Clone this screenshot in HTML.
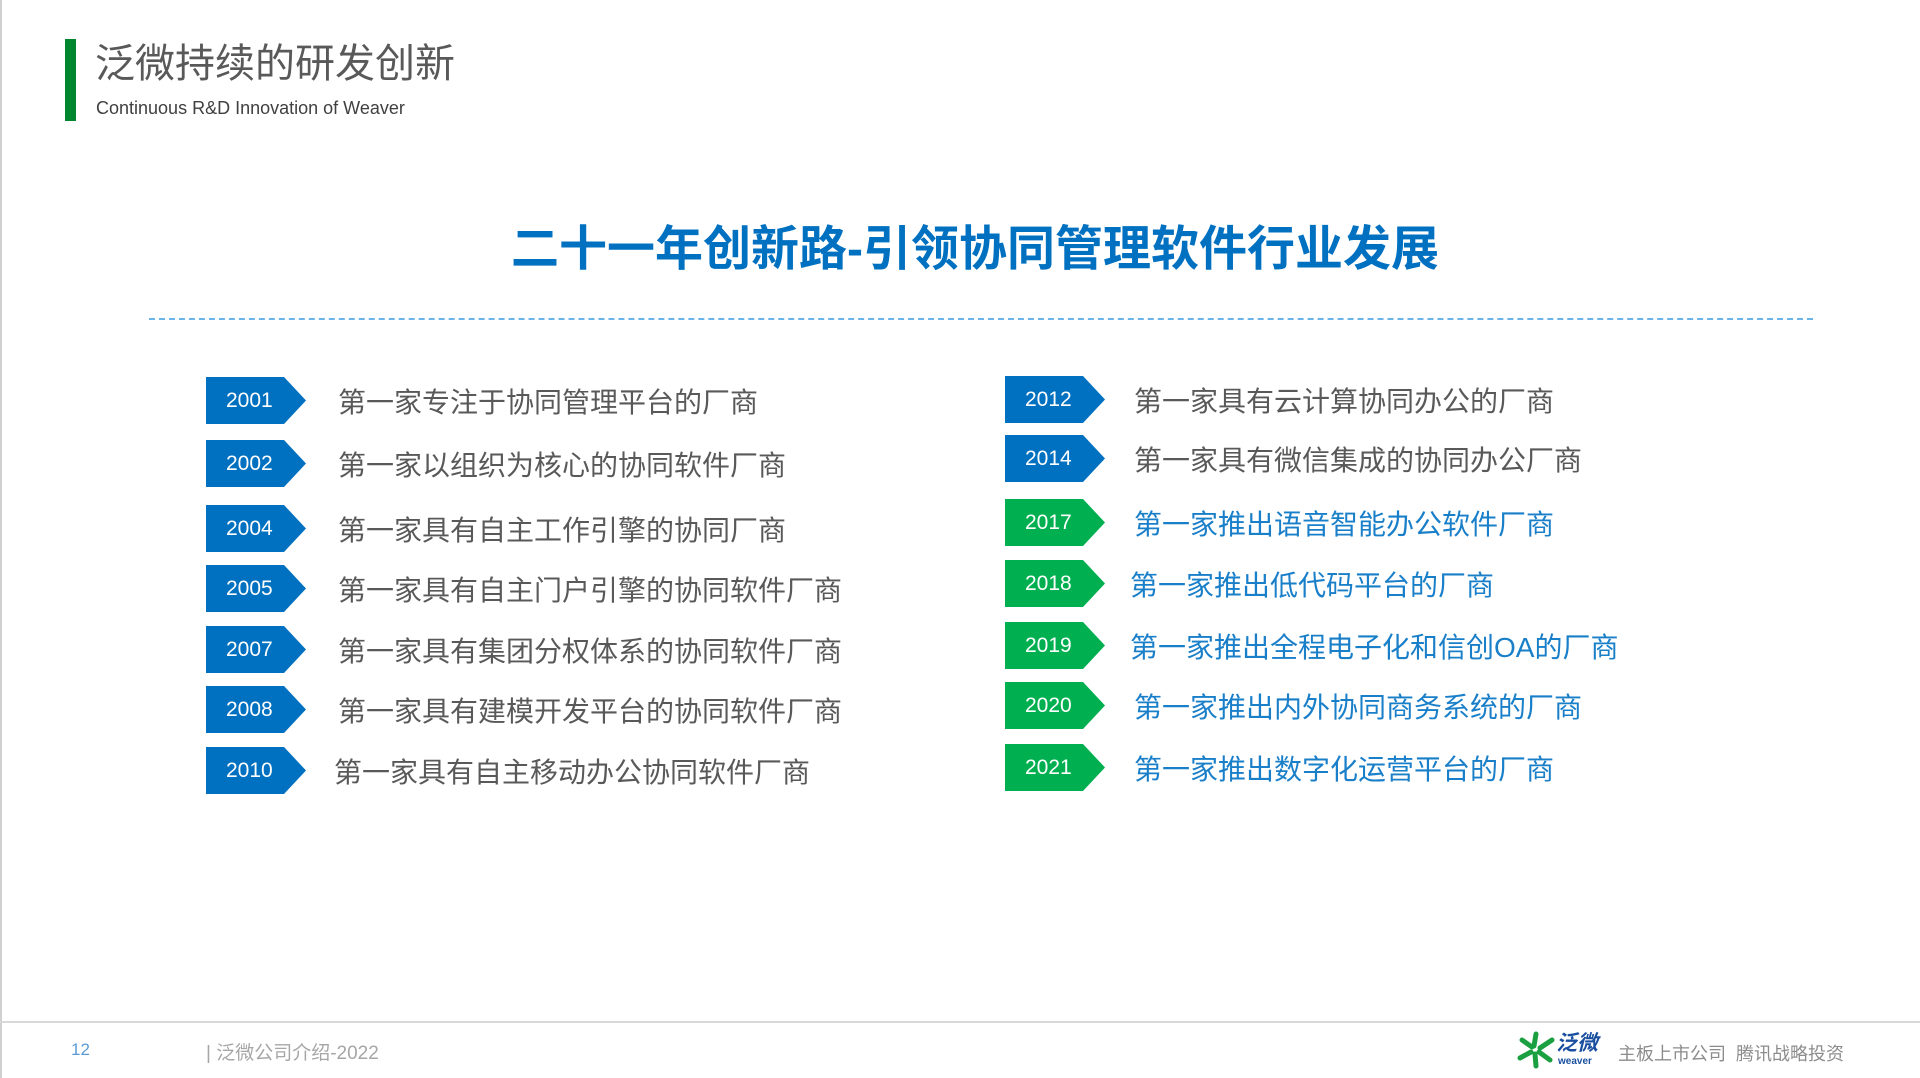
<!DOCTYPE html>
<html><head><meta charset="utf-8"><style>
*{margin:0;padding:0;box-sizing:border-box}
body{width:1920px;height:1078px;background:#fff;position:relative;overflow:hidden;font-family:"Liberation Sans","Noto Sans CJK SC",sans-serif}
.a{position:absolute;white-space:nowrap}
.box{position:absolute;width:100px;height:47px;clip-path:polygon(0 0,78% 0,100% 50%,78% 100%,0 100%);color:#fff;font-size:21px;line-height:47px;padding-left:20px}
.b{background:#0070c0}.g{background:#00b050}
.t{position:absolute;font-size:28px;line-height:36px;color:#595959;white-space:nowrap;margin-top:3px}
.tb{color:#1a7fc9}
</style></head><body>
<div class="a" style="left:0;top:0;width:2px;height:1078px;background:#d0d0d0"></div>
<div class="a" style="left:65px;top:39px;width:11px;height:82px;background:#00862f"></div>
<div class="a" style="left:95px;top:40px;font-size:40px;line-height:48px;color:#595959">泛微持续的研发创新</div>
<div class="a" style="left:96px;top:97px;font-size:18px;line-height:22px;color:#404040">Continuous R&amp;D Innovation of Weaver</div>
<div class="a" style="left:511px;top:222px;font-size:48px;line-height:56px;color:#0070c0;font-weight:bold">二十一年创新路-引领协同管理软件行业发展</div>
<div class="a" style="left:149px;top:318px;width:1664px;border-top:2px dashed #6ab4ea"></div>

<div class="box b" style="left:206px;top:377px">2001</div><div class="t" style="left:338px;top:382px">第一家专注于协同管理平台的厂商</div>
<div class="box b" style="left:206px;top:440px">2002</div><div class="t" style="left:338px;top:445px">第一家以组织为核心的协同软件厂商</div>
<div class="box b" style="left:206px;top:505px">2004</div><div class="t" style="left:338px;top:510px">第一家具有自主工作引擎的协同厂商</div>
<div class="box b" style="left:206px;top:565px">2005</div><div class="t" style="left:338px;top:570px">第一家具有自主门户引擎的协同软件厂商</div>
<div class="box b" style="left:206px;top:626px">2007</div><div class="t" style="left:338px;top:631px">第一家具有集团分权体系的协同软件厂商</div>
<div class="box b" style="left:206px;top:686px">2008</div><div class="t" style="left:338px;top:691px">第一家具有建模开发平台的协同软件厂商</div>
<div class="box b" style="left:206px;top:747px">2010</div><div class="t" style="left:334px;top:752px">第一家具有自主移动办公协同软件厂商</div>

<div class="box b" style="left:1005px;top:376px">2012</div><div class="t" style="left:1134px;top:381px">第一家具有云计算协同办公的厂商</div>
<div class="box b" style="left:1005px;top:435px">2014</div><div class="t" style="left:1134px;top:440px">第一家具有微信集成的协同办公厂商</div>
<div class="box g" style="left:1005px;top:499px">2017</div><div class="t tb" style="left:1134px;top:504px">第一家推出语音智能办公软件厂商</div>
<div class="box g" style="left:1005px;top:560px">2018</div><div class="t tb" style="left:1130px;top:565px">第一家推出低代码平台的厂商</div>
<div class="box g" style="left:1005px;top:622px">2019</div><div class="t tb" style="left:1130px;top:627px">第一家推出全程电子化和信创OA的厂商</div>
<div class="box g" style="left:1005px;top:682px">2020</div><div class="t tb" style="left:1134px;top:687px">第一家推出内外协同商务系统的厂商</div>
<div class="box g" style="left:1005px;top:744px">2021</div><div class="t tb" style="left:1134px;top:749px">第一家推出数字化运营平台的厂商</div>

<div class="a" style="left:0;top:1021px;width:1920px;height:2px;background:#d9d9d9"></div>
<div class="a" style="left:71px;top:1040px;font-size:17px;color:#5b9bd5">12</div>
<div class="a" style="left:206px;top:1038px;font-size:19px;color:#a6a6a6">| 泛微公司介绍-2022</div>
<svg class="a" style="left:1516px;top:1030px" width="40" height="40" viewBox="0 0 40 40"><g stroke="#1aa040" stroke-width="5" stroke-linecap="round"><path d="M20 4L18 16M36 10L24 18M34 30L23 22M20 36L19 24M4 28L15 22M6 10L16 17"/></g></svg>
<div class="a" style="left:1556px;top:1032px;font-size:21px;font-weight:bold;color:#1a4fa0;font-style:italic;line-height:24px">泛微</div>
<div class="a" style="left:1558px;top:1057px;font-size:10px;font-weight:bold;color:#1a4fa0;line-height:10px">weaver</div>
<div class="a" style="left:1618px;top:1040px;font-size:18px;color:#8c8c8c">主板上市公司&nbsp;&nbsp;腾讯战略投资</div>
</body></html>
